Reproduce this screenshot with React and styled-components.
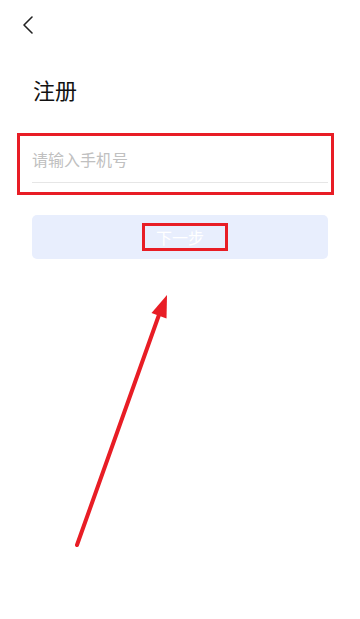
import React from "react";
import styled, { createGlobalStyle } from "styled-components";

const Global = createGlobalStyle`
  html, body { margin: 0; padding: 0; background: #ffffff; }
  body { font-family: "Noto Sans CJK SC", "Noto Sans", sans-serif; }
  * { box-sizing: border-box; }
`;

const Page = styled.div`
  position: relative;
  width: 360px;
  height: 619px;
  overflow: hidden;
  background: #fff;
`;

const TopBar = styled.div`
  height: 50px;
  display: flex;
  align-items: flex-start;
  padding: 15px 0 0 18px;
`;

const BackButton = styled.button`
  width: 20px;
  height: 20px;
  padding: 0;
  border: none;
  background: transparent;
  display: flex;
  align-items: center;
  justify-content: center;
`;

const Content = styled.div`
  padding: 0 32px;
  display: flex;
  flex-direction: column;
`;

const Title = styled.h1`
  margin: 24px 0 0 1px;
  font-size: 22px;
  line-height: 30px;
  font-weight: 400;
  color: #111;
`;

const Field = styled.div`
  margin-top: 43px;
  border-bottom: 1px solid #e6e6e6;
  padding-bottom: 11px;
`;

const Input = styled.input`
  width: 100%;
  border: none;
  outline: none;
  padding: 0;
  font-family: inherit;
  font-size: 16px;
  line-height: 24px;
  height: 24px;
  color: #333;
  &::placeholder { color: #c0c0c0; }
`;

const NextButton = styled.button`
  margin-top: 32px;
  height: 44px;
  border: none;
  border-radius: 5px;
  background: #e8eefd;
  color: #ffffff;
  font-family: inherit;
  font-size: 16px;
  display: flex;
  align-items: center;
  justify-content: center;
`;

const Mark = styled.div`
  position: absolute;
  border: 3.5px solid #e81d25;
  left: ${(p) => p.$x}px;
  top: ${(p) => p.$y}px;
  width: ${(p) => p.$w}px;
  height: ${(p) => p.$h}px;
  pointer-events: none;
`;

const Overlay = styled.svg`
  position: absolute;
  left: 0;
  top: 0;
  pointer-events: none;
`;

export default function App() {
  return (
    <>
      <Global />
      <Page>
        <TopBar>
          <BackButton aria-label="返回">
            <svg width="14" height="20" viewBox="0 0 14 20">
              <path d="M11 2 L3 10 L11 18" fill="none" stroke="#222" strokeWidth="1.6" strokeLinecap="round" strokeLinejoin="round" />
            </svg>
          </BackButton>
        </TopBar>
        <Content>
          <Title>注册</Title>
          <Field>
            <Input placeholder="请输入手机号" />
          </Field>
          <NextButton>下一步</NextButton>
        </Content>

        <Mark $x={17} $y={133} $w={317} $h={62} />
        <Mark $x={142} $y={223} $w={86} $h={28} />
        <Overlay width="360" height="619" viewBox="0 0 360 619">
          <line x1="77" y1="545" x2="160" y2="312" stroke="#e81d25" strokeWidth="4" strokeLinecap="round" />
          <polygon points="167,295 151.5,313 166.5,318.5" fill="#e81d25" />
        </Overlay>
      </Page>
    </>
  );
}
